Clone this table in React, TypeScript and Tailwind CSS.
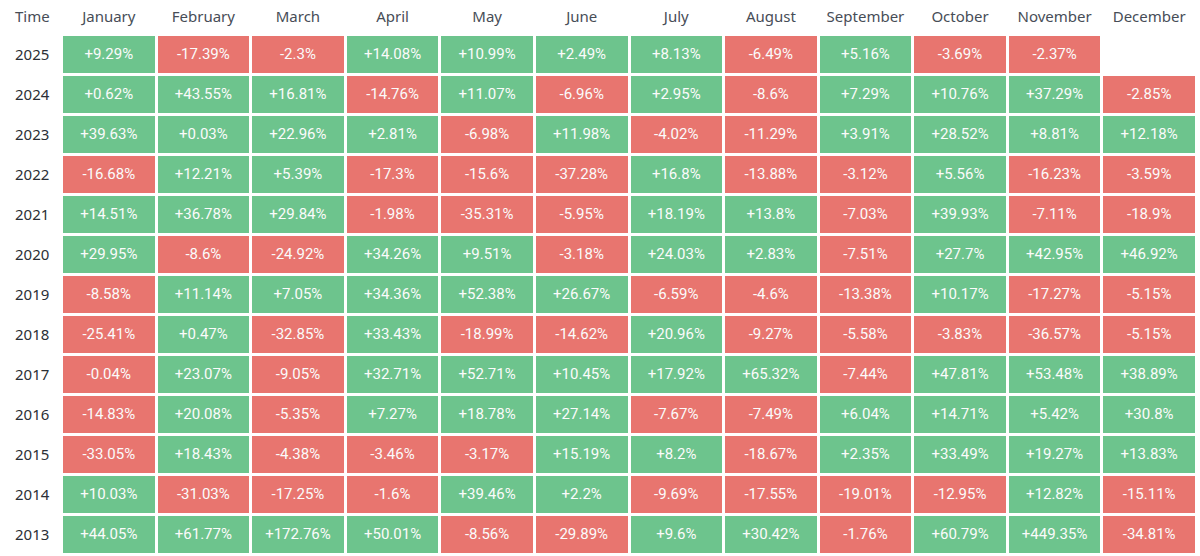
import React from "react";

const months = ["January","February","March","April","May","June","July","August","September","October","November","December"];

const data: [string, (string | null)[]][] = [
  ["2025", ["+9.29","-17.39","-2.3","+14.08","+10.99","+2.49","+8.13","-6.49","+5.16","-3.69","-2.37",null]],
  ["2024", ["+0.62","+43.55","+16.81","-14.76","+11.07","-6.96","+2.95","-8.6","+7.29","+10.76","+37.29","-2.85"]],
  ["2023", ["+39.63","+0.03","+22.96","+2.81","-6.98","+11.98","-4.02","-11.29","+3.91","+28.52","+8.81","+12.18"]],
  ["2022", ["-16.68","+12.21","+5.39","-17.3","-15.6","-37.28","+16.8","-13.88","-3.12","+5.56","-16.23","-3.59"]],
  ["2021", ["+14.51","+36.78","+29.84","-1.98","-35.31","-5.95","+18.19","+13.8","-7.03","+39.93","-7.11","-18.9"]],
  ["2020", ["+29.95","-8.6","-24.92","+34.26","+9.51","-3.18","+24.03","+2.83","-7.51","+27.7","+42.95","+46.92"]],
  ["2019", ["-8.58","+11.14","+7.05","+34.36","+52.38","+26.67","-6.59","-4.6","-13.38","+10.17","-17.27","-5.15"]],
  ["2018", ["-25.41","+0.47","-32.85","+33.43","-18.99","-14.62","+20.96","-9.27","-5.58","-3.83","-36.57","-5.15"]],
  ["2017", ["-0.04","+23.07","-9.05","+32.71","+52.71","+10.45","+17.92","+65.32","-7.44","+47.81","+53.48","+38.89"]],
  ["2016", ["-14.83","+20.08","-5.35","+7.27","+18.78","+27.14","-7.67","-7.49","+6.04","+14.71","+5.42","+30.8"]],
  ["2015", ["-33.05","+18.43","-4.38","-3.46","-3.17","+15.19","+8.2","-18.67","+2.35","+33.49","+19.27","+13.83"]],
  ["2014", ["+10.03","-31.03","-17.25","-1.6","+39.46","+2.2","-9.69","-17.55","-19.01","-12.95","+12.82","-15.11"]],
  ["2013", ["+44.05","+61.77","+172.76","+50.01","-8.56","-29.89","+9.6","+30.42","-1.76","+60.79","+449.35","-34.81"]],
];

export default function App() {
  return (
    <div className="w-[1200px] h-[556px] bg-white overflow-hidden">
      <div className="grid grid-cols-[60px_repeat(12,minmax(0,1fr))] gap-[3px] pr-[5px] font-['Noto_Sans',sans-serif]">
        <div className="h-[33px] flex items-center pl-[15px] text-[15px] text-[#474d57]">Time</div>
        {months.map((m) => (
          <div key={m} className="h-[33px] flex items-center justify-center text-[15px] text-[#474d57]">{m}</div>
        ))}
        {data.map(([year, vals]) => (
          <React.Fragment key={year}>
            <div className="h-[37px] flex items-center pl-[15px] text-[15px] text-[#2b2f36]">{year}</div>
            {vals.map((v, i) =>
              v === null ? (
                <div key={i} className="h-[37px]" />
              ) : (
                <div
                  key={i}
                  className={`h-[37px] flex items-center justify-center text-[15px] text-[#fbfbfb] font-['Roboto',sans-serif] ${v.startsWith("-") ? "bg-[#e8756f]" : "bg-[#6dc48d]"}`}
                >
                  {v}%
                </div>
              )
            )}
          </React.Fragment>
        ))}
      </div>
    </div>
  );
}
